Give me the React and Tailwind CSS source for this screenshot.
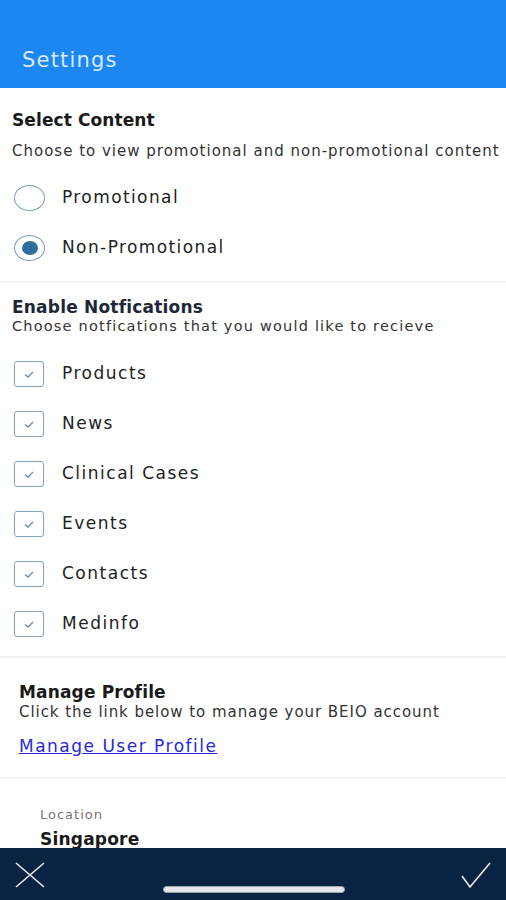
import { useState } from 'react'

const font = { fontFamily: '"DejaVu Sans", "Liberation Sans", Arial, sans-serif' }

function Radio({ checked, label, onClick }) {
  return (
    <button onClick={onClick} className="flex h-[50px] w-full items-center text-left">
      <span className="ml-[14px] flex h-[26px] w-[31px] items-center justify-center rounded-[50%] border-[1.5px] border-[#7d9cb8]">
        {checked && <span className="h-[14px] w-[16px] rounded-[50%] bg-[#2f6e9d]" />}
      </span>
      <span className="ml-[17px] text-[17px] tracking-[1.4px] text-[#222]">{label}</span>
    </button>
  )
}

function Check({ checked, label, onClick }) {
  return (
    <button onClick={onClick} className="flex h-[50px] w-full items-center text-left">
      <span className="ml-[14px] flex h-[26px] w-[30px] items-center justify-center rounded-[3px] border-[1.5px] border-[#86a4c0]">
        {checked && (
          <svg width="14" height="10" viewBox="0 0 14 10">
            <path d="M3 5.5 L6 8 L11 3" fill="none" stroke="#6a8db0" strokeWidth="1.3" />
          </svg>
        )}
      </span>
      <span className="ml-[18px] text-[17px] tracking-[1.5px] text-[#222]">{label}</span>
    </button>
  )
}

export default function App() {
  const [promo, setPromo] = useState('non')
  const [notifs, setNotifs] = useState({
    Products: true,
    News: true,
    'Clinical Cases': true,
    Events: true,
    Contacts: true,
    Medinfo: true,
  })

  return (
    <div style={font} className="relative flex h-[900px] w-[506px] flex-col overflow-hidden bg-white">
      {/* Header */}
      <div className="flex h-[88px] shrink-0 items-end bg-[#1d87f1] pb-[12px] pl-[22px]">
        <span className="text-[21px] tracking-[1.2px] text-[#d7e9ff]">Settings</span>
      </div>

      <div className="flex-1 overflow-hidden">
        {/* Select Content */}
        <div className="border-b-2 border-[#f2f2f2] pb-[8px] pt-[21px]">
          <div className="pl-[12px] text-[17px] font-bold leading-[22px] tracking-[0.1px] text-[#1a1a1a]">Select Content</div>
          <div className="mt-[11px] whitespace-nowrap pl-[12px] text-[15px] leading-[18px] tracking-[1px] text-[#333]">
            Choose to view promotional and non-promotional content
          </div>
          <div className="mt-[13px]">
            <Radio label="Promotional" checked={promo === 'promo'} onClick={() => setPromo('promo')} />
            <Radio label="Non-Promotional" checked={promo === 'non'} onClick={() => setPromo('non')} />
          </div>
        </div>

        {/* Notifications */}
        <div className="border-b-2 border-[#f2f2f2] pb-[7px] pt-[13px]">
          <div className="pl-[12px] text-[17px] font-bold leading-[22px] tracking-[0.2px] text-[#1c2838]">Enable Notfications</div>
          <div className="whitespace-nowrap pl-[12px] text-[14.5px] leading-[17px] tracking-[1.2px] text-[#333]">
            Choose notfications that you would like to recieve
          </div>
          <div className="mt-[14px]">
            {Object.keys(notifs).map((k) => (
              <Check
                key={k}
                label={k}
                checked={notifs[k]}
                onClick={() => setNotifs((n) => ({ ...n, [k]: !n[k] }))}
              />
            ))}
          </div>
        </div>

        {/* Manage Profile */}
        <div className="border-b-2 border-[#f2f2f2] px-[19px] pb-[20px] pt-[23px]">
          <div className="text-[17px] font-bold leading-[22px] tracking-[0.15px] text-[#1a1a1a]">Manage Profile</div>
          <div className="whitespace-nowrap text-[15px] leading-[18px] tracking-[0.95px] text-[#333]">Click the link below to manage your BEIO account</div>
          <a href="#" className="mt-[14px] block text-[17px] leading-[22px] tracking-[1.5px] text-[#2727e0] underline">
            Manage User Profile
          </a>
        </div>

        {/* Location */}
        <div className="pl-[40px] pt-[28px]">
          <div className="text-[13px] leading-[16px] tracking-[1px] text-[#777]">Location</div>
          <div className="mt-[5px] text-[17px] font-bold leading-[22px] tracking-[0.2px] text-[#1a1a1a]">Singapore</div>
        </div>
      </div>

      {/* Bottom bar */}
      <div className="relative flex h-[52px] shrink-0 items-start justify-between bg-[#0b2342] px-[14px] pt-[13px]">
        <svg width="32" height="28" viewBox="0 0 32 28">
          <path d="M2 2 L30 26 M30 2 L2 26" stroke="#e8ecf2" strokeWidth="1.6" fill="none" />
        </svg>
        <svg width="32" height="28" viewBox="0 0 32 28">
          <path d="M2 15 L10 26 L30 2" stroke="#e8ecf2" strokeWidth="1.6" fill="none" />
        </svg>
        <div className="absolute bottom-[7px] left-[163px] h-[7px] w-[182px] rounded-full border border-[#9aa] bg-[#e4e4ea]" />
      </div>
    </div>
  )
}
